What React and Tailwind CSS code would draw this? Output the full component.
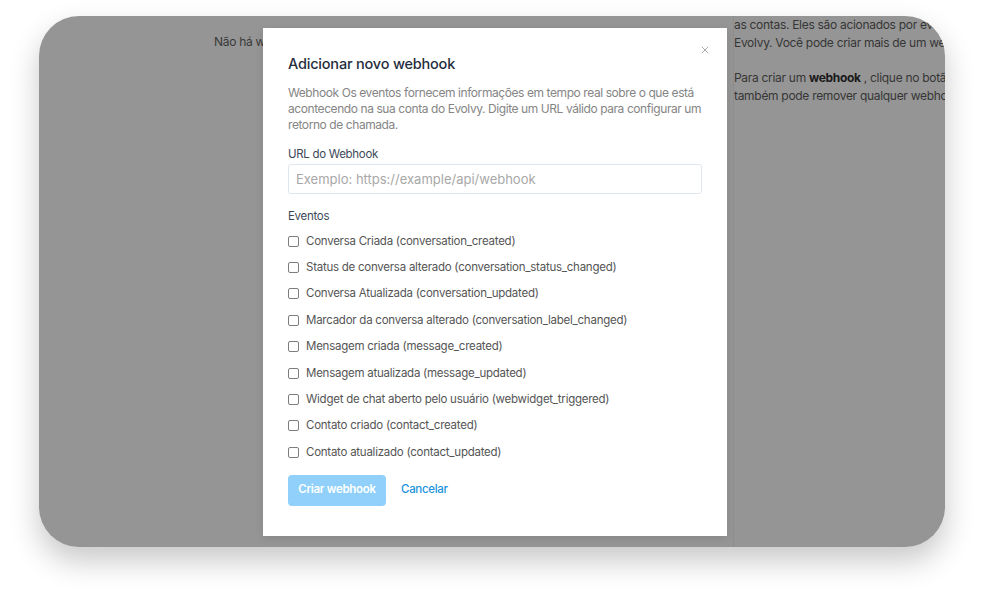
import React from 'react';
import { X } from 'lucide-react';

const events = [
  'Conversa Criada (conversation_created)',
  'Status de conversa alterado (conversation_status_changed)',
  'Conversa Atualizada (conversation_updated)',
  'Marcador da conversa alterado (conversation_label_changed)',
  'Mensagem criada (message_created)',
  'Mensagem atualizada (message_updated)',
  'Widget de chat aberto pelo usuário (webwidget_triggered)',
  'Contato criado (contact_created)',
  'Contato atualizado (contact_updated)',
];

export default function App() {
  return (
    <div className="w-[989px] h-[593px] bg-white pt-[16px] pl-[39px] font-['Inter',sans-serif]">
      {/* Frame */}
      <div className="relative w-[906px] h-[531px] rounded-[40px] bg-[#959595] overflow-hidden shadow-[0_14px_30px_rgba(0,0,0,0.22)] flex">
        {/* Page behind overlay */}
        <div className="w-[694px] shrink-0 pl-[175px] pt-[17px]">
          <p className="text-[12px] leading-[18px] tracking-[-0.3px] text-[#3a3a3a] whitespace-nowrap">
            Não há webhooks configurados nesta conta.
          </p>
        </div>
        <div className="flex-1 min-w-0 border-l border-[#8e8e8e] -mt-[19px] text-[12px] leading-[18.5px] tracking-[-0.3px] text-[#353535] whitespace-nowrap">
          <p>Os eventos do webhook fornecem informações em tempo real sobre o</p>
          <p>as contas. Eles são acionados por eventos que acontecem na sua conta do</p>
          <p>Evolvy. Você pode criar mais de um webhook para a mesma conta.</p>
          <p className="mt-[16px]">
            Para criar um <span className="font-bold text-[#1a1a1a]">webhook</span> , clique no botão Adicionar novo webhook. Você
          </p>
          <p>também pode remover qualquer webhook existente clicando no botão</p>
        </div>

        {/* Modal */}
        <div className="absolute left-[224px] top-[12px] w-[464px] h-[508px] bg-white shadow-[0_2px_8px_rgba(0,0,0,0.1)] px-[25px] pt-[26px] flex flex-col">
          <button className="absolute top-[16px] right-[16px] text-[#7a7a7a]">
            <X size={12} strokeWidth={1.3} />
          </button>
          <h2 className="text-[14.5px] leading-[20px] tracking-[-0.2px] font-medium text-[#1f2d3d]">Adicionar novo webhook</h2>
          <p className="mt-[11px] text-[12px] leading-[16px] tracking-[-0.42px] text-[#858585]">
            Webhook Os eventos fornecem informações em tempo real sobre o que está acontecendo na sua conta do Evolvy. Digite um URL válido para configurar um retorno de chamada.
          </p>
          <label className="mt-[13px] text-[11.5px] leading-[16px] tracking-[-0.3px] text-[#3c4858]">URL do Webhook</label>
          <input
            className="mt-[2px] h-[30px] w-full border border-[#e0e6ed] rounded-[3px] px-[7px] text-[13px] placeholder:text-[#a8a8a8] outline-none"
            placeholder="Exemplo: https://example/api/webhook"
          />
          <div className="mt-[14px] text-[11.5px] leading-[16px] tracking-[-0.3px] text-[#3c4858]">Eventos</div>
          <div className="mt-[4px] flex flex-col">
            {events.map((e) => (
              <label key={e} className="h-[26.4px] flex items-center gap-[7px] text-[11.5px] tracking-[-0.25px] text-[#555]">
                <input
                  type="checkbox"
                  className="appearance-none w-[11px] h-[11px] border border-[#7d7d7d] rounded-[2px] bg-white"
                />
                <span>{e}</span>
              </label>
            ))}
          </div>
          <div className="mt-[9px] flex items-center gap-[15px]">
            <button className="w-[98px] h-[31px] rounded-[4px] bg-[#90d0fa] text-white text-[11.5px] font-semibold tracking-[-0.3px]">
              Criar webhook
            </button>
            <button className="text-[11.5px] font-medium tracking-[-0.3px] text-[#1a93dc]">Cancelar</button>
          </div>
        </div>
      </div>
    </div>
  );
}
